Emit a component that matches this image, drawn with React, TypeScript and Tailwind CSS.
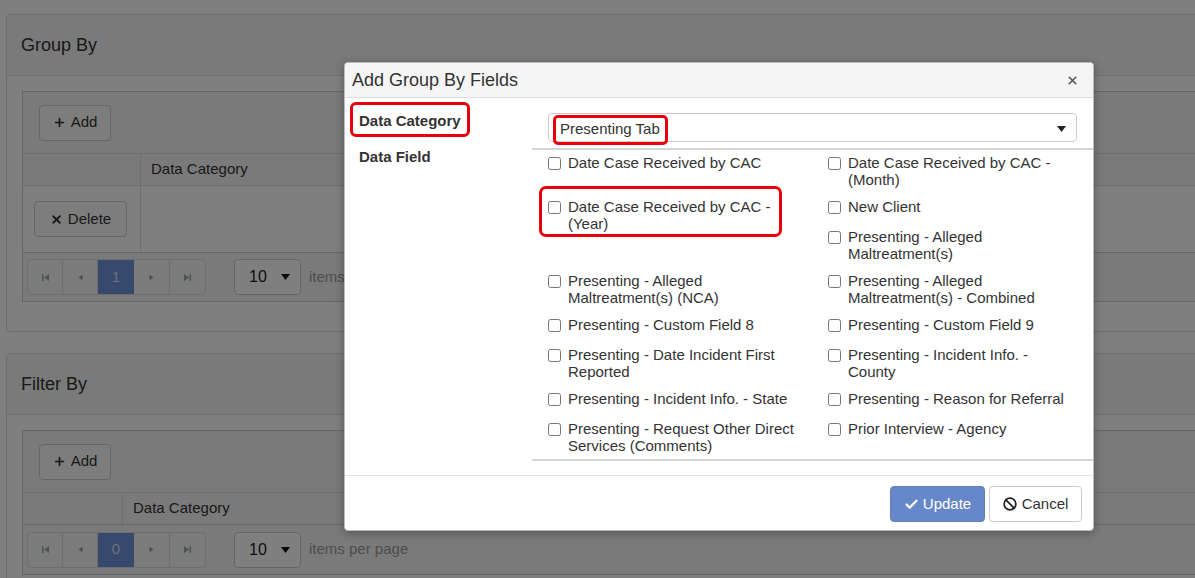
import { Ban, Check, Plus, X } from "lucide-react";

const fields: { label: string; marked?: boolean; span?: boolean }[] = [
  { label: "Date Case Received by CAC" },
  { label: "Date Case Received by CAC - (Month)" },
  { label: "Date Case Received by CAC - (Year)", marked: true, span: true },
  { label: "New Client" },
  { label: "Presenting - Alleged Maltreatment(s)" },
  { label: "Presenting - Alleged Maltreatment(s) (NCA)" },
  { label: "Presenting - Alleged Maltreatment(s) - Combined" },
  { label: "Presenting - Custom Field 8" },
  { label: "Presenting - Custom Field 9" },
  { label: "Presenting - Date Incident First Reported" },
  { label: "Presenting - Incident Info. - County" },
  { label: "Presenting - Incident Info. - State" },
  { label: "Presenting - Reason for Referral" },
  { label: "Presenting - Request Other Direct Services (Comments)" },
  { label: "Prior Interview - Agency" },
];

function Caret({ className = "" }: { className?: string }) {
  return (
    <svg width="9" height="6" viewBox="0 0 9 6" className={className}>
      <path d="M0 0h9L4.5 6z" fill="currentColor" />
    </svg>
  );
}

function PagerIcon({ kind }: { kind: "first" | "prev" | "next" | "last" }) {
  return (
    <svg width="9" height="9" viewBox="0 0 9 9" className="text-[#9aa3b5]">
      {kind === "first" && (
        <>
          <rect x="1" y="1" width="1.5" height="7" fill="currentColor" />
          <path d="M8 1v7L3 4.5z" fill="currentColor" />
        </>
      )}
      {kind === "prev" && <path d="M6.5 1.5v6L2.5 4.5z" fill="currentColor" />}
      {kind === "next" && <path d="M2.5 1.5v6l4-3z" fill="currentColor" />}
      {kind === "last" && (
        <>
          <path d="M1 1v7l5-3.5z" fill="currentColor" />
          <rect x="6.5" y="1" width="1.5" height="7" fill="currentColor" />
        </>
      )}
    </svg>
  );
}

function Pager({ page, height }: { page: string; height: string }) {
  return (
    <div className={`flex items-center border-t border-[#ccc] bg-[#f5f5f5] pl-[4px] ${height}`}>
      <div className="flex h-[36px] overflow-hidden rounded-[4px] border border-[#ddd] bg-[#f7f7f7]">
        <div className="flex w-[35px] items-center justify-center border-r border-[#ddd]">
          <PagerIcon kind="first" />
        </div>
        <div className="flex w-[35px] items-center justify-center border-r border-[#ddd]">
          <PagerIcon kind="prev" />
        </div>
        <div className="flex w-[36px] items-center justify-center bg-[#6f93d8] text-[15px] text-[#d6e0f5]">
          {page}
        </div>
        <div className="flex w-[36px] items-center justify-center border-r border-[#ddd]">
          <PagerIcon kind="next" />
        </div>
        <div className="flex w-[35px] items-center justify-center">
          <PagerIcon kind="last" />
        </div>
      </div>
      <div className="ml-[28px] flex h-[36px] w-[67px] items-center justify-between rounded-[4px] border border-[#ccc] bg-white pl-[14px] pr-[10px] text-[16px] text-[#222]">
        <span>10</span>
        <Caret className="text-[#111]" />
      </div>
      <span className="ml-[8px] text-[15px] text-[#999]">items per page</span>
    </div>
  );
}

function Panel({
  title,
  firstCol,
  withRow,
  page,
}: {
  title: string;
  firstCol: string;
  withRow: boolean;
  page: string;
}) {
  return (
    <div className="w-[1240px] rounded-[4px] border border-[#ddd] bg-white">
      <div className="flex h-[61px] items-center border-b border-[#ddd] bg-[#f5f5f5] px-[14px] text-[18px] text-[#333]">
        {title}
      </div>
      <div className={`px-[15px] pt-[15px] ${withRow ? "pb-[29px]" : "pb-[15px]"}`}>
        <div className="border border-[#ccc]">
          <div className="flex h-[62px] items-center border-b border-[#ddd] bg-[#f5f5f5] pl-[16px]">
            <button className="flex h-[36px] w-[72px] items-center justify-center gap-[5px] rounded-[4px] border border-[#ccc] bg-[#fafafa] text-[15px] text-[#333]">
              <Plus size={13} strokeWidth={3.2} />
              Add
            </button>
          </div>
          <div className="flex h-[31px] bg-[#f5f5f5] text-[15px] text-[#333]">
            <div className={`${firstCol} border-r border-[#ddd]`} />
            <div className="flex items-center pl-[10px]">Data Category</div>
          </div>
          {withRow && (
            <div className="flex h-[67px] border-t border-[#ddd] bg-white">
              <div className={`${firstCol} flex items-center border-r border-[#ddd] pl-[11px]`}>
                <button className="flex h-[36px] w-[93px] items-center justify-center gap-[5px] rounded-[4px] border border-[#ccc] bg-[#fafafa] text-[15px] text-[#333]">
                  <X size={13} strokeWidth={3.4} />
                  Delete
                </button>
              </div>
            </div>
          )}
          <Pager page={page} height={withRow ? "h-[49px]" : "h-[50px]"} />
        </div>
      </div>
    </div>
  );
}

function FieldItem({ label, marked, span }: { label: string; marked?: boolean; span?: boolean }) {
  return (
    <div className={`relative flex items-start gap-[7px] ${span ? "row-span-2" : ""}`}>
      <input type="checkbox" className="m-0 mb-[4px] mt-[3px] h-[13px] w-[13px] shrink-0" readOnly />
      <span className="max-w-[228px] leading-[17px]">{label}</span>
      {marked && (
        <div className="pointer-events-none absolute -left-[9px] -top-[12px] h-[51px] w-[243px] rounded-[7px] border-[3px] border-[#e8000b]" />
      )}
    </div>
  );
}

function Modal() {
  return (
    <div className="absolute left-[344px] top-[62px] flex h-[469px] w-[750px] flex-col overflow-hidden rounded-[4px] border border-[#bbb] bg-white shadow-[0_2px_10px_rgba(0,0,0,0.3)]">
      <div className="flex h-[35px] shrink-0 items-center justify-between border-b border-[#ddd] bg-[#f5f5f5] pl-[7px] pr-[14px]">
        <span className="text-[18px] text-[#333]">Add Group By Fields</span>
        <X size={13} strokeWidth={3} className="text-[#555]" />
      </div>
      <div className="flex flex-1">
        <div className="w-[187px] shrink-0 pl-[14px] pt-[14px]">
          <div className="flex flex-col gap-[19px] text-[15px] font-bold leading-[17px] text-[#333]">
            <div className="relative">
              Data Category
              <div className="pointer-events-none absolute -left-[9px] -top-[10px] h-[35px] w-[120px] rounded-[6px] border-[3px] border-[#e8000b]" />
            </div>
            <div>Data Field</div>
          </div>
        </div>
        <div className="flex-1 pt-[15px]">
          <div className="relative mx-[16px] flex h-[29px] items-center justify-between rounded-[4px] border border-[#ccc] bg-white pl-[11px] pr-[10px] pt-[3px] text-[15px] text-[#333]">
            <span>Presenting Tab</span>
            <Caret className="text-[#222]" />
            <div className="pointer-events-none absolute left-[4px] top-[1px] h-[30px] w-[115px] rounded-[5px] border-[3px] border-[#e8000b]" />
          </div>
          <div className="mt-[6px] border-y-2 border-[#d4d4d4] pb-[5px] pl-[16px] pt-[4px] text-[15px] text-[#333]">
            <div className="grid grid-cols-[280px_1fr] gap-y-[10px]">
              {fields.map((f) => (
                <FieldItem key={f.label} {...f} />
              ))}
            </div>
          </div>
        </div>
      </div>
      <div className="flex h-[55px] shrink-0 items-center justify-end gap-[4px] border-t border-[#e5e5e5] pr-[11px] pt-[2px]">
        <button className="flex h-[36px] w-[95px] items-center justify-center gap-[4px] rounded-[4px] border border-[#5f7fbf] bg-[#6788c8] text-[15px] text-white">
          <Check size={15} strokeWidth={3.5} />
          Update
        </button>
        <button className="flex h-[36px] w-[93px] items-center justify-center gap-[5px] rounded-[4px] border border-[#ccc] bg-white text-[15px] text-[#333]">
          <Ban size={14} strokeWidth={3} className="text-[#222]" />
          Cancel
        </button>
      </div>
    </div>
  );
}

export default function App() {
  return (
    <div className="relative h-[578px] w-[1195px] overflow-hidden bg-white font-['Liberation_Sans',Arial,sans-serif]">
      <div className="flex flex-col gap-[21px] pl-[6px] pt-[14px]">
        <Panel title="Group By" firstCol="w-[118px]" withRow page="1" />
        <Panel title="Filter By" firstCol="w-[100px]" withRow={false} page="0" />
      </div>
      <div className="absolute inset-0 bg-black/50" />
      <Modal />
    </div>
  );
}
